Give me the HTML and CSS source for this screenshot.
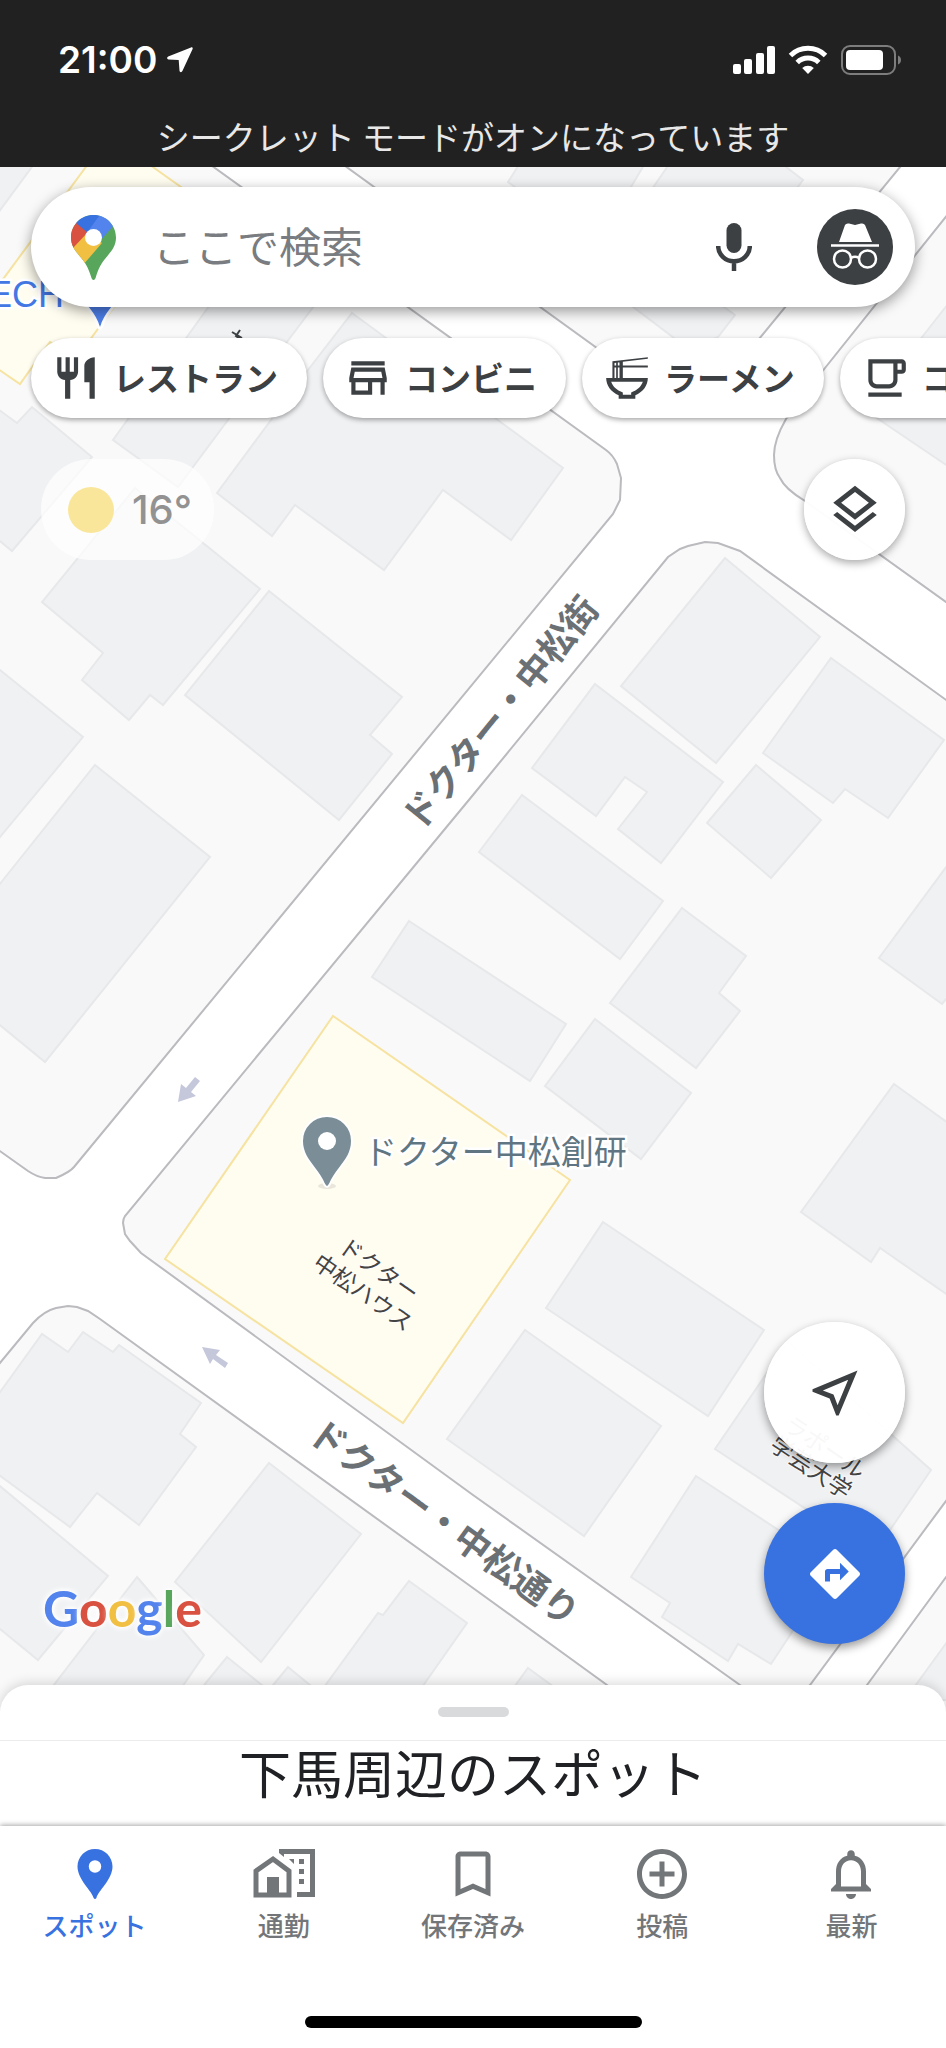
FILE: index.html
```html
<!DOCTYPE html>
<html lang="ja">
<head>
  <meta charset="UTF-8">
  <meta name="viewport" content="width=device-width, initial-scale=1">
  <title>Google マップ</title>
  <link rel="stylesheet" href="styles.css">
</head>
<body>

  <header class="topbar">
    <div class="status">
      <span class="time">21:00</span>
      <svg class="loc" width="26" height="26" viewBox="0 0 26 26"><path d="M24 .4 1.2 9.6c-1.6.7-1.4 2.6.3 2.8l10.200 .6.8 10.800c.2 1.700 2.200 1.900 2.900.3L25.600 2C26 .8 25.200 0 24 .4z" fill="#fff"/></svg>
      <svg class="signal" width="42" height="28" viewBox="0 0 42 28" fill="#fff">
        <rect x="0" y="18" width="8" height="10" rx="2"/><rect x="11" y="13" width="8" height="15" rx="2"/>
        <rect x="23" y="7" width="8" height="21" rx="2"/><rect x="34" y="0" width="8" height="28" rx="2"/>
      </svg>
      <svg class="wifi" width="40" height="30" viewBox="0 0 40 30" fill="none" stroke="#fff" stroke-width="5">
        <path d="M2.500 10.500a25 25 0 0 1 35 0"/><path d="M9.200 17.500a15.500 15.500 0 0 1 21.600 0"/>
        <path d="M20 29l-5.800-6a8.500 8.500 0 0 1 11.600 0z" fill="#fff" stroke="none"/>
      </svg>
      <svg class="battery" width="61" height="30" viewBox="0 0 61 30">
        <rect x="1" y="1" width="53" height="28" rx="8" fill="none" stroke="#7d7d7d" stroke-width="2"/>
        <rect x="5" y="5" width="37" height="20" rx="4" fill="#fff"/>
        <path d="M57 10.500c4 1 4 8 0 9z" fill="#7d7d7d"/>
      </svg>
    </div>
    <p class="incognito">シークレット モードがオンになっています</p>
  </header>

  <main class="map">
    <svg class="tiles" viewBox="0 167 946 1573" preserveAspectRatio="xMidYMin slice">
      <!-- blocks between the streets -->
      <g class="block">
        <path d="M-10 150H190L606 450Q613 455 617 464L621 478 620 500 613 514 74 1167Q70 1172 56 1178H45Q37 1177 28 1171L-10 1144z"/>
        <path d="M323 150 655 390Q690 415 718 389L914 150z"/>
        <path d="M960 199 825 368 786 419Q774 440 774 455T780 478Q785 489 805 501L960 612z"/>
        <path d="M960 710 740 551 718 543 705 542 688 546 680 549 668 557 473 795 125 1216Q123 1219 123 1223L125 1234 130 1241 141 1253 473 1495 740 1685 780 1712 810 1685 960 1482z"/>
        <path d="M-10 1375 33 1323Q44 1311 56 1308L68 1306 77 1307 88 1311 100 1319 473 1588 607 1685 690 1745H-10z"/>
        <path d="M960 1558 867 1685 825 1745H960z"/>
      </g>
      <g class="building">
        <path d="M-5 160H37L-5 217z"/>
        <path d="M-5 407 17 423 32 407 92 457 12 551-5 537z"/>
        <path d="M212 302H317L228 420 178 487 113 440z"/>
        <path d="M352 313 563 468 511 540 443 490 384 570 295 505 272 536 217 493 308 370z"/>
        <path d="M135 488 260 589 163 705 150 695 129 720 82 680 103 653 42 602z"/>
        <path d="M269 591 402 697 370 735 392 754 339 820 185 695z"/>
        <path d="M-5 666 83 737-5 843z"/>
        <path d="M95 765 210 857 45 1062-5 1021V890z"/>
        <path d="M522 160H647L628 192H522L508 182z"/>
        <path d="M672 160H777L803 180 794 192H650z"/>
        <path d="M620 297H710L735 315 718 337 690 350z"/>
        <path d="M955 295 865 410 955 471z"/>
        <path d="M725 558 820 637 716 763 621 686z"/>
        <path d="M831 658 944 740 888 818 845 789 833 803 763 753z"/>
        <path d="M595 684 723 782 661 863 618 829 647 792 625 777 596 816 532 768z"/>
        <path d="M756 765 821 820 771 878 707 823z"/>
        <path d="M522 795 663 901 620 959 479 852z"/>
        <path d="M682 908 746 956 719 993 740 1011 696 1068 610 1003z"/>
        <path d="M409 921 566 1024 530 1081 372 977z"/>
        <path d="M595 1019 691 1093 641 1159 545 1086z"/>
        <path d="M955 855 879 958 942 1004 955 988z"/>
        <path d="M894 1084 955 1128V1300L880 1248 871 1262 801 1212z"/>
        <path d="M603 1222 764 1330 708 1416 546 1308z"/>
        <path d="M525 1330 661 1426 584 1536 447 1439z"/>
        <path d="M788 1342 931 1470 890 1530 850 1538 715 1449z"/>
        <path d="M696 1476 835 1567 771 1664 738 1644 728 1661 662 1617 670 1603 631 1577z"/>
        <path d="M-5 1399 42 1334 68 1352 83 1332 113 1352 119 1345 201 1403 180 1434 196 1447 139 1525 97 1493 70 1527-5 1472z"/>
        <path d="M-5 1482 108 1576 38 1660-5 1625z"/>
        <path d="M269 1463 361 1534 261 1662 175 1582z"/>
        <path d="M137 1577 204 1655 180 1690H50z"/>
        <path d="M409 1581 467 1623 420 1690H322L378 1613 383 1615z"/>
        <path d="M227 1657 268 1690H200z"/><path d="M288 1667 316 1690H269z"/><path d="M528 1668 558 1690H512z"/>
        <path d="M955 1631 905 1700H955z"/>
      </g>
      <g class="poi-area">
        <path d="M91 160H143L195 197 75 360 50 342 20 384-5 367V290z"/>
        <path d="M333 1016 570 1180 403 1423 165 1259z"/>
      </g>
      <!-- one-way arrows -->
      <g fill="#c5c7db">
        <path d="M178 1102 181 1084 186 1088 195 1077 200 1081 191 1092 196 1096z"/>
        <path d="M202 1347 220 1350 216 1355 228 1363 225 1368 213 1359 210 1364z"/>
      </g>
      <path d="M232 332 242 338M240 330 236 336 244 342" stroke="#3c4043" stroke-width="2" fill="none"/>
      <!-- street names -->
      <g class="street">
        <text transform="translate(498 711) rotate(-51)">ドクター・中松街</text>
        <text transform="translate(446 1520) rotate(36)">ドクター・中松通り</text>
      </g>
      <g class="house">
        <text transform="translate(380 1268) rotate(35)">ドクター</text>
        <text transform="translate(364 1291) rotate(35)">中松ハウス</text>
        <text transform="translate(826 1446) rotate(34)">ラポール</text>
        <text transform="translate(812 1466) rotate(34)">学芸大学</text>
      </g>
      <text class="poi poi-blue" x="-12" y="307">ECH</text>
      <path d="M76 285C80 305 94 310 98 326Q100 331 102 326C106 310 120 305 124 285z" fill="#4c7ee8" stroke="#fff" stroke-width="3"/>
      <ellipse cx="327" cy="1186" rx="9" ry="3" fill="#e9e6dc"/>
      <path d="M327 1116C313 1116 302 1127 302 1141C302 1160 318 1168 324 1184Q327 1190 330 1184C336 1168 352 1160 352 1141C352 1127 341 1116 327 1116z" fill="#7b8e98" stroke="#fff" stroke-width="2"/>
      <circle cx="327" cy="1141" r="9" fill="#fff"/>
      <text class="poi" x="364" y="1164">ドクター中松創研</text>
    </svg>

    <div class="overlay">
      <form class="search">
        <svg class="logo" width="45" height="65" viewBox="0 0 45 65">
          <clipPath id="pin"><path d="M22.500 0C10 0 0 10 0 22.500c0 8 4 13 9 19 6 7 8 11 11 20 .6 2.200 1.300 3.500 2.500 3.500s2-1.300 2.500-3.500c3-9 5-13 11-20 5-6 9-11 9-19C45 10 35 0 22.500 0z"/></clipPath>
          <g clip-path="url(#pin)">
            <path d="M0 0h45v65H0z" fill="#58a55c"/>
            <path d="M-3 38 15 17 31 28 12 50-3 50z" fill="#f1bf42"/>
            <path d="M5 7 17 17 2 33-3 33V7z" fill="#d95140"/>
            <path d="M5 8V-3H32L17 18z" fill="#3871e0"/>
            <path d="M31-3 45 8 28 27 15 19z" fill="#5383ec"/>
          </g>
          <circle cx="22.500" cy="22.500" r="8.500" fill="#fff"/>
        </svg>
        <input type="text" placeholder="ここで検索" aria-label="ここで検索">
        <button type="button" class="mic" aria-label="音声検索">
          <svg width="36" height="48" viewBox="0 0 36 48"><rect x="10.500" width="15" height="30" rx="7.500" fill="#3c4043"/><path d="M2.200 23a15.800 15.300 0 0 0 31.600 0M18 38v10" fill="none" stroke="#3c4043" stroke-width="4.500"/></svg>
        </button>
        <button type="button" class="avatar" aria-label="アカウント">
          <svg width="76" height="76" viewBox="0 0 76 76">
            <circle cx="38" cy="38" r="38" fill="#3c4043"/>
            <path d="M22 33 28 16Q29 14 32 14.500L38 16 44 14.500Q47 14 48 16L55 33z" fill="#fff"/>
            <path d="M14 36.500h48" stroke="#fff" stroke-width="2.500"/>
            <g fill="none" stroke="#fff" stroke-width="2.500"><circle cx="25.500" cy="50" r="8.500"/><circle cx="50.500" cy="50" r="8.500"/><path d="M34 49q4-2.500 8 0"/></g>
          </svg>
        </button>
      </form>

      <div class="chips">
        <button class="chip">
          <svg viewBox="0 0 24 24"><path d="M11 9H9V2H7v7H5V2H3v7c0 2.120 1.660 3.840 3.750 3.970V22h2.500v-9.030C11.340 12.840 13 11.120 13 9V2h-2v7zm5-3v8h2.500v8H21V2c-2.760 0-5 2.240-5 4z"/></svg>
          <span>レストラン</span>
        </button>
        <button class="chip">
          <svg viewBox="0 0 24 24"><path d="M18.360 9l.6 3H5.040l.6-3h12.720M20 4H4v2h16V4zm0 3H4l-1 5v2h1v6h10v-6h4v6h2v-6h1v-2l-1-5zM6 18v-4h6v4H6z"/></svg>
          <span>コンビニ</span>
        </button>
        <button class="chip">
          <svg viewBox="0 0 24 24"><path d="M22 2.800V2L5 3.900V12H2c0 3.690 2.470 6.860 6 8.250V22h8v-1.750c3.530-1.390 6-4.560 6-8.250H10V7h12V6H10V4.200zM6 4.800l.8-.1V6H6zM7.600 4.600l.8-.1V6h-.8zM6 7h.8v5H6zM7.600 7h.8v5h-.8zM14 18.900V20h-4v-1.100C7.400 18 5.200 16.300 4.400 13.800h15.200C18.800 16.300 16.600 18 14 18.900z" fill-rule="evenodd"/></svg>
          <span>ラーメン</span>
        </button>
        <button class="chip">
          <svg viewBox="0 0 24 24"><path d="M16 5v8c0 1.100-.9 2-2 2H8c-1.100 0-2-.9-2-2V5h10m4-2H4v10c0 2.210 1.790 4 4 4h6c2.210 0 4-1.790 4-4v-3h2c1.110 0 2-.89 2-2V5c0-1.110-.89-2-2-2zm-2 5V5h2v3h-2zm2 11H4v2h16v-2z"/></svg>
          <span>コーヒー</span>
        </button>
      </div>

      <div class="row">
        <div class="weather"><span class="sun"></span>16°</div>
        <button class="round layers" aria-label="レイヤ">
          <svg width="58" height="58" viewBox="0 0 24 24"><path d="M11.990 18.540l-7.370-5.730L3 14.070l9 7 9-7-1.630-1.270zM12 16l7.360-5.730L21 9l-9-7-9 7 1.630 1.270L12 16zm0-11.470L17.740 9 12 13.470 6.260 9 12 4.530z"/></svg>
        </button>
      </div>

      <div class="row bottom">
        <div class="google"><span class="b">G</span><span class="r">o</span><span class="y">o</span><span class="b">g</span><span class="g">l</span><span class="r">e</span></div>
        <div class="fabs">
          <button class="round fab" aria-label="現在地">
            <svg width="60" height="60" viewBox="0 0 24 24"><path d="M17.270 6.730l-4.240 10.130-1.320-3.420-.32-.83-.82-.32-3.430-1.330 10.130-4.230M21 3L3 10.530v.98l6.840 2.650L12.480 21h.98L21 3z"/></svg>
          </button>
          <button class="round fab route" aria-label="経路">
            <svg width="60" height="60" viewBox="0 0 24 24"><path d="M21.710 11.290l-9-9c-.39-.39-1.020-.39-1.410 0l-9 9c-.39.39-.39 1.020 0 1.410l9 9c.39.39 1.020.39 1.410 0l9-9c.39-.38.39-1.010 0-1.410zM14 14.500V12h-4v3H8v-4c0-.55.45-1 1-1h5V7.500l3.500 3.500-3.500 3.500z"/></svg>
          </button>
        </div>
      </div>
    </div>
  </main>

  <section class="sheet">
    <div class="grip"><span></span></div>
    <h1>下馬周辺のスポット</h1>
  </section>

  <footer class="footer">
    <nav class="tabs">
      <a href="#" class="tab active">
        <svg width="60" height="60" viewBox="0 0 24 24"><path d="M12 2C8.130 2 5 5.130 5 9c0 5.250 6 10 6.400 12.500q.6 1 1.200 0C13 19 19 14.250 19 9c0-3.870-3.130-7-7-7zm0 9.500a2.500 2.500 0 0 1 0-5 2.500 2.500 0 0 1 0 5z"/></svg>
        スポット
      </a>
      <a href="#" class="tab">
        <svg width="62" height="60" viewBox="0 0 62 60">
          <path d="M3 51V27L20 15 36 27V51z" fill="none" stroke="#737679" stroke-width="5"/>
          <path d="M14 33h12v18H14zM26 5h36v48H44v-5h13V10H31v3l-5-4zM46 15h5v5h-5zM46 25h5v5h-5zM46 35h5v5h-5zM36 15h5v5z"/>
        </svg>
        通勤
      </a>
      <a href="#" class="tab">
        <svg width="60" height="60" viewBox="0 0 24 24"><path d="M17 3H7c-1.100 0-1.990.9-1.990 2L5 21l7-3 7 3V5c0-1.100-.9-2-2-2zm0 15l-5-2.180L7 18V5h10v13z"/></svg>
        保存済み
      </a>
      <a href="#" class="tab">
        <svg width="60" height="60" viewBox="0 0 24 24"><path d="M13 7h-2v4H7v2h4v4h2v-4h4v-2h-4V7zm-1-5C6.480 2 2 6.480 2 12s4.480 10 10 10 10-4.480 10-10S17.520 2 12 2zm0 18c-4.410 0-8-3.590-8-8s3.590-8 8-8 8 3.590 8 8-3.590 8-8 8z"/></svg>
        投稿
      </a>
      <a href="#" class="tab">
        <svg width="60" height="60" viewBox="0 0 24 24"><path d="M12 22c1.100 0 2-.9 2-2h-4c0 1.100.89 2 2 2zm6-6v-5c0-3.070-1.640-5.640-4.500-6.320V4c0-.83-.67-1.500-1.500-1.500s-1.500.67-1.500 1.500v.68C7.630 5.360 6 7.920 6 11v5l-2 2v1h16v-1l-2-2zm-2 1H8v-6c0-2.480 1.510-4.500 4-4.500s4 2.020 4 4.500v6z"/></svg>
        最新
      </a>
    </nav>
    <div class="home"></div>
  </footer>

</body>
</html>
```
FILE: styles.css
```css
* { box-sizing: border-box; }
body {
  margin: 0; min-height: 100vh;
  display: flex; flex-direction: column;
  font-family: "Noto Sans CJK JP", sans-serif;
  background: #fff; color: #202124;
}
button { border: none; padding: 0; background: none; font-family: inherit; cursor: pointer; }
svg { display: block; flex-shrink: 0; }

/* top */
.topbar { background: #212121; color: #fff; padding-top: 32px; }
.status { display: flex; align-items: center; height: 56px; padding: 0 44px 0 58px; }
.time { font: 600 37px/56px Inter, sans-serif; }
.loc { margin-left: 10px; }
.signal { margin-left: auto; }
.wifi { margin-left: 13px; }
.battery { margin-left: 13px; }
.incognito {
  margin: 0; padding: 20px 0 3px; text-align: center; color: #e8e8e8;
  font-size: 33px; line-height: 56px; font-weight: 400;
}

/* map */
.map { position: relative; flex: 1; display: flex; overflow: hidden; background: #fff; }
.tiles { position: absolute; top: 0; left: 0; width: 100%; height: 100%; }
.block { fill: #f9f9f9; stroke: #bababf; stroke-width: 2; }
.building { fill: #f0f1f3; stroke: #e7e8ea; stroke-width: 2; }
.poi-area { fill: #fffcf0; stroke: #f6e3a1; stroke-width: 2; }
.street text { font-size: 36px; font-weight: 700; fill: #6b7074; }
.house text { font-size: 23px; fill: #444; }
.street text, .house text {
  text-anchor: middle; dominant-baseline: central;
  stroke: #fff; stroke-width: 2; stroke-opacity: .6; paint-order: stroke;
}
.poi { font-size: 33px; fill: #5f7682; stroke: #fff; stroke-width: 5; paint-order: stroke; }
.poi-blue { font-family: "Liberation Sans", sans-serif; font-size: 36px; fill: #4277e4; }

.overlay {
  position: relative; width: 100%;
  display: flex; flex-direction: column; padding: 20px 0 96px;
}
.search {
  display: flex; align-items: center; height: 120px;
  margin: 0 31px; padding: 0 22px 0 40px; border-radius: 60px;
  background: #fff; box-shadow: 0 4px 14px rgba(0, 0, 0, .4);
}
.search input {
  flex: 1; min-width: 0; border: none; outline: none; background: none;
  margin-left: 37px; padding: 0 0 4px; font: 400 42px/60px "Noto Sans CJK JP", sans-serif;
}
.search input::placeholder { color: #797c80; opacity: 1; }
.mic { margin-right: 65px; }
.avatar { border-radius: 50%; }

.chips { display: flex; gap: 16px; margin-top: 31px; padding-left: 31px; }
.chip {
  display: flex; align-items: center; gap: 12px; flex-shrink: 0;
  height: 80px; padding: 0 29px 0 20px; border-radius: 40px;
  background: #fff; box-shadow: 0 2px 5px rgba(0, 0, 0, .35);
  color: #3c4043; font-size: 33px; font-weight: 700; line-height: 48px; white-space: nowrap;
}
.chip span { padding-bottom: 2px; }
.chip svg { width: 50px; height: 50px; fill: #3c4043; }

.row { display: flex; justify-content: space-between; margin-top: 41px; padding: 0 41px; }
.weather {
  display: flex; align-items: center; gap: 18px;
  height: 101px; padding: 0 22px 0 27px; border-radius: 50px;
  background: rgba(255, 255, 255, .7); color: #929292;
  font: 500 40px/48px Inter, sans-serif;
}
.sun { width: 46px; height: 46px; border-radius: 50%; background: #f9e69b; }
.round {
  display: flex; align-items: center; justify-content: center;
  border-radius: 50%; background: rgba(255, 255, 255, .96);
  box-shadow: 0 3px 8px rgba(0, 0, 0, .35);
}
.round svg { fill: #3c4043; }
.layers { width: 101px; height: 101px; }
.bottom { margin-top: auto; align-items: flex-end; }
.fabs { display: flex; flex-direction: column; gap: 40px; }
.fab { width: 141px; height: 141px; box-shadow: 0 4px 10px rgba(0, 0, 0, .4); }
.route { background: #3871e0; }
.route svg { fill: #fff; }
.google {
  padding-left: 2px; font: 700 50px/72px Lato, sans-serif;
  text-shadow: 0 0 4px #fff, 0 0 6px #fff, 0 0 8px #fff;
}
.b { color: #5383ec; }
.r { color: #d95140; }
.y { color: #f1bf42; }
.g { color: #58a55c; }

/* bottom sheet */
.sheet { position: relative; margin-top: -55px; }
.grip {
  display: flex; justify-content: center; height: 56px; padding-top: 22px;
  border-radius: 28px 28px 0 0; border-bottom: 1px solid #ececec;
  background: #fff; box-shadow: 0 -2px 12px rgba(0, 0, 0, .15);
}
.grip span { width: 71px; height: 10px; border-radius: 5px; background: #d9dadc; }
.sheet h1 {
  margin: 0; padding-bottom: 23px; background: #fff;
  text-align: center; font-size: 52px; line-height: 62px; font-weight: 400;
}

.footer { position: relative; padding: 18px 0 20px; background: #fff; box-shadow: 0 -1px 5px rgba(0, 0, 0, .35); }
.tabs { display: flex; }
.tab {
  flex: 1; display: flex; flex-direction: column; align-items: center;
  color: #737679; font-size: 26px; line-height: 42px; font-weight: 500; text-decoration: none;
}
.tab svg { fill: #737679; }
.active { color: #3871e0; }
.active svg { fill: #3871e0; }
.home { width: 337px; height: 12px; margin: 70px auto 0; border-radius: 6px; background: #000; }
```
